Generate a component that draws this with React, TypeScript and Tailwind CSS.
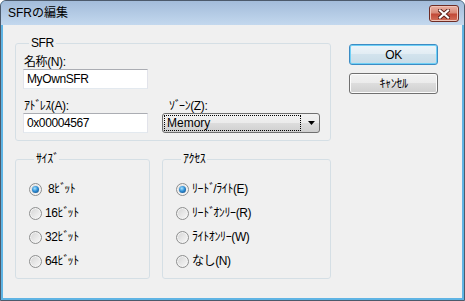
import React from "react";

// half-width dakuten sits loose in Noto, so kana+dakuten pairs get tighter tracking
function Kana({ text }: { text: string }) {
  const parts: string[] = [];
  for (const ch of Array.from(text)) {
    if ((ch === "ﾞ" || ch === "ﾟ") && parts.length) {
      parts[parts.length - 1] += ch;
    } else {
      parts.push(ch);
    }
  }
  return (
    <>
      {parts.map((p, i) =>
        p.length > 1 ? (
          <span key={i} className="tracking-[-2px]">
            {p}
          </span>
        ) : (
          <React.Fragment key={i}>{p}</React.Fragment>
        )
      )}
    </>
  );
}

type RadioProps = {
  checked?: boolean;
  label: string;
};

function Radio({ checked = false, label }: RadioProps) {
  return (
    <label className="flex h-[24px] items-center">
      <span className="flex h-[13px] w-[13px] shrink-0 items-center justify-center rounded-full border border-[#8e8f8f] bg-[linear-gradient(135deg,#d4d4d4,#f9f9f9)] shadow-[inset_0_0_0_1px_#f4f4f4]">
        {checked && (
          <span className="h-[7px] w-[7px] rounded-full bg-[radial-gradient(circle_at_40%_35%,#a9e4ff_0%,#2f8fd6_45%,#0d3c70_100%)]" />
        )}
      </span>
      <span className="ml-[3px] whitespace-pre">
        <Kana text={label} />
      </span>
    </label>
  );
}

function GroupBox({
  title,
  className,
  children,
}: {
  title: string;
  className?: string;
  children: React.ReactNode;
}) {
  return (
    <fieldset
      className={[
        "rounded-[3px] border border-[#d5dfe5]",
        className ?? "",
      ].join(" ")}
    >
      <legend className="ml-[5px] whitespace-nowrap px-[2px] leading-[14px]">
        <Kana text={title} />
      </legend>
      {children}
    </fieldset>
  );
}

function TextBox({ value }: { value: string }) {
  return (
    <div className="flex h-[20px] w-[125px] items-center border border-[#e2e3ea] border-t-[#abadb3] border-b-[#e3e9ef] bg-white pl-[3px]">
      {value}
    </div>
  );
}

function Button({ label, primary = false }: { label: string; primary?: boolean }) {
  return (
    <button
      type="button"
      className={[
        "flex h-[21px] w-[89px] items-center justify-center rounded-[3px] border",
        primary
          ? "border-[#3c8cc4] bg-[linear-gradient(#edf5fa,#e1ecf3_50%,#d2e3ed_50%,#c8dce8)] shadow-[inset_0_0_0_1px_#6fd0f6]"
          : "border-[#707070] bg-[linear-gradient(#f2f2f2,#ebebeb_50%,#dddddd_50%,#cfcfcf)] shadow-[inset_0_0_0_1px_#fcfcfc]",
      ].join(" ")}
    >
      <Kana text={label} />
    </button>
  );
}

export default function App() {
  return (
    <div className="flex h-[301px] w-[465px] flex-col overflow-hidden rounded-t-[6px] border border-[#4c5a6b] bg-[#5fb4e4] font-['Liberation_Sans','Noto_Sans_CJK_JP',sans-serif] text-[12px] tracking-[-0.4px] text-black">
      {/* title bar */}
      <div className="flex h-[24px] shrink-0 items-start justify-between bg-linear-to-b from-[#a3bcda] to-[#c3d8ee]">
        <span className="ml-[7px] mt-[5px] text-[12px] leading-[14px] tracking-normal">
          SFRの編集
        </span>
        <button
          type="button"
          className="mr-[5px] mt-[4px] flex h-[17px] w-[30px] items-center justify-center rounded-[3px] border border-[#6e2c24] bg-[linear-gradient(#eab1a3,#d98a78_45%,#c24a38_55%,#d2705a)] shadow-[inset_0_0_0_1px_#f0c4b8]"
        >
          <svg width="12" height="10" viewBox="0 0 12 10">
            <path d="M2 1.5 L10 8.5 M10 1.5 L2 8.5" stroke="#5a1f18" strokeWidth="4" strokeLinecap="square" />
            <path d="M2 1.5 L10 8.5 M10 1.5 L2 8.5" stroke="#ffffff" strokeWidth="2.2" strokeLinecap="square" />
          </svg>
        </button>
      </div>

      {/* client area */}
      <div className="mx-[2px] mb-[2px] flex flex-1 bg-[#f0f0f0] pl-[12px] pt-[11px]">
        <div className="flex w-[316px] flex-col">
          <GroupBox title="SFR" className="pb-[7px] pl-[8px] pt-[5px]">
            <div className="leading-[14px]">名称(N):</div>
            <div className="-ml-px">
              <TextBox value="MyOwnSFR" />
            </div>
            <div className="-ml-px mt-[10px] flex">
              <div className="flex w-[125px] flex-col">
                <div className="pl-px leading-[14px]">
                  <Kana text="ｱﾄﾞﾚｽ(A):" />
                </div>
                <TextBox value="0x00004567" />
              </div>
              <div className="ml-[14px] flex w-[158px] flex-col">
                <div className="pl-[7px] leading-[14px]">
                  <Kana text="ｿﾞｰﾝ(Z):" />
                </div>
                <div className="flex h-[20px] items-center rounded-[3px] border border-[#707070] bg-[linear-gradient(#f2f2f2,#ebebeb_50%,#dddddd_50%,#cfcfcf)] pl-[1px] pr-[4px]">
                  <div className="flex h-[16px] w-[138px] items-center border border-dotted border-black pl-[2px] tracking-normal">
                    Memory
                  </div>
                  <svg className="ml-[7px]" width="7" height="4" viewBox="0 0 7 4">
                    <path d="M0 0 H7 L3.5 4 Z" fill="#000" />
                  </svg>
                </div>
              </div>
            </div>
          </GroupBox>

          <div className="mt-[11px] flex gap-[12px]">
            <GroupBox title="ｻｲｽﾞ" className="w-[135px] pb-[5px] pl-[13px] pt-[11px]">
              <Radio checked label={"\u00a08ﾋﾞｯﾄ"} />
              <Radio label="16ﾋﾞｯﾄ" />
              <Radio label="32ﾋﾞｯﾄ" />
              <Radio label="64ﾋﾞｯﾄ" />
            </GroupBox>
            <GroupBox title="ｱｸｾｽ" className="w-[169px] pb-[5px] pl-[13px] pt-[11px]">
              <Radio checked label="ﾘｰﾄﾞ/ﾗｲﾄ(E)" />
              <Radio label="ﾘｰﾄﾞｵﾝﾘｰ(R)" />
              <Radio label="ﾗｲﾄｵﾝﾘｰ(W)" />
              <Radio label="なし(N)" />
            </GroupBox>
          </div>
        </div>

        <div className="ml-[18px] mt-[8px] flex flex-col gap-[8px]">
          <Button label="OK" primary />
          <Button label="ｷｬﾝｾﾙ" />
        </div>
      </div>
    </div>
  );
}
